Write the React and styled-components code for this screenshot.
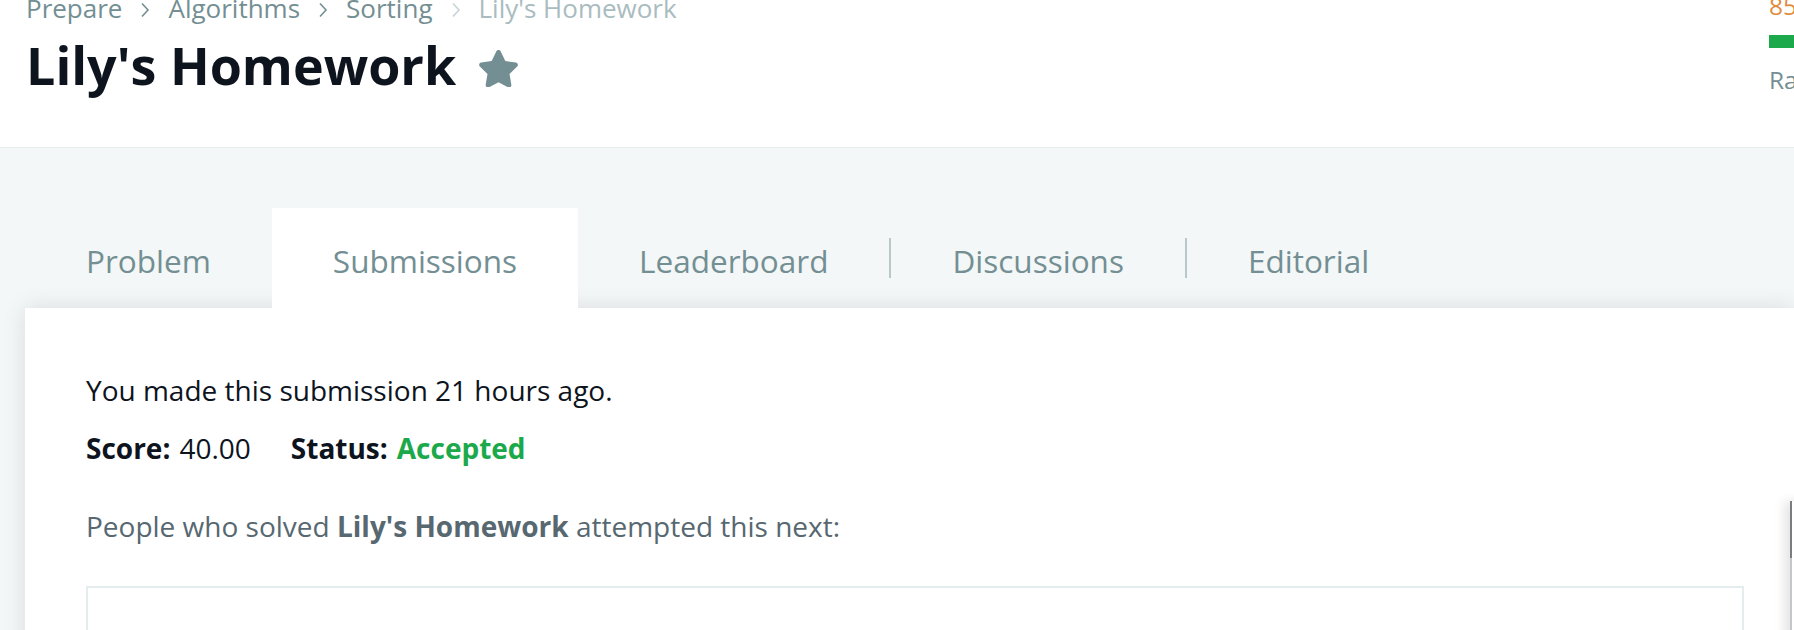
import React from "react";
import styled, { createGlobalStyle } from "styled-components";

const Global = createGlobalStyle`
  html, body { margin: 0; padding: 0; background: #f3f7f7; overflow: hidden; }
  body { font-family: "Open Sans", "Liberation Sans", sans-serif; }
  * { box-sizing: border-box; }
`;

const Page = styled.div`
  position: relative;
  width: 100%;
  height: 630px;
  overflow: hidden;
  background: #f3f7f7;
`;

const Header = styled.header`
  display: flex;
  justify-content: space-between;
  align-items: flex-start;
  height: 148px;
  padding: 0 0 0 26px;
  background: #fff;
  border-bottom: 1px solid #e8eef0;
`;

const TitleBlock = styled.div`
  display: flex;
  flex-direction: column;
`;

const Crumbs = styled.nav`
  display: flex;
  align-items: center;
  gap: 18px;
  margin-top: -9px;
  font-size: 26px;
  line-height: 35px;
  white-space: nowrap;
`;

const Crumb = styled.span`
  color: ${(p) => (p.$current ? "#a9bcbf" : "#738f93")};
`;

const Chevron = ({ light }) => (
  <svg width="10" height="16" viewBox="0 0 10 16" style={{ marginTop: 2 }}>
    <polyline
      points="2,1.5 8,8 2,14.5"
      fill="none"
      stroke={light ? "#c6d3d5" : "#738f93"}
      strokeWidth="1.6"
    />
  </svg>
);

const TitleRow = styled.div`
  display: flex;
  align-items: flex-start;
  margin-top: 7px;
`;

const Title = styled.h1`
  margin: 0;
  font-size: 52px;
  line-height: 63px;
  font-weight: 700;
  color: #0e141e;
  white-space: nowrap;
`;

const StarIcon = styled.svg`
  margin-left: 23px;
  margin-top: 17px;
  flex-shrink: 0;
`;

const Progress = styled.div`
  width: 25px;
  display: flex;
  flex-direction: column;
  white-space: nowrap;
  font-size: 24.5px;
  line-height: 34px;
`;

const ProgressNote = styled.div`
  margin-top: -11.5px;
  color: #df8c3e;
`;

const ProgressBar = styled.div`
  margin-top: 12.5px;
  width: 320px;
  height: 13px;
  background: #1ba94c;
`;

const ProgressMeta = styled.div`
  margin-top: 14.5px;
  color: #738f93;
`;

const Main = styled.main`
  padding: 60px 0 0 25px;
`;

const TabList = styled.div`
  position: relative;
  z-index: 1;
  display: flex;
  align-items: stretch;
`;

const Tab = styled.div`
  height: 100px;
  display: flex;
  align-items: center;
  padding: 4px 61px 0;
  font-size: 31.5px;
  color: #738f93;
  background: ${(p) => (p.$active ? "#fff" : "transparent")};
  white-space: nowrap;
`;

const Divider = styled.span`
  align-self: center;
  width: 2px;
  height: 40px;
  background: #b9c8cb;
`;

const Panel = styled.section`
  background: #fff;
  padding: 61px 50px 0 61px;
  min-height: 420px;
  box-shadow: 0 0 22px rgba(14, 20, 30, 0.11);
`;

const Line = styled.p`
  margin: ${(p) => p.$mt || 0}px 0 0;
  font-size: 28px;
  line-height: 42px;
  color: ${(p) => p.$color || "#0e141e"};
`;

const StatRow = styled.div`
  display: flex;
  gap: 40px;
  margin-top: 16px;
  font-size: 28px;
  line-height: 42px;
  color: #0e141e;
`;

const Stat = styled.div`
  display: flex;
  gap: 9px;
`;

const StatLabel = styled.span`
  font-weight: 700;
`;

const StatValue = styled.span`
  color: ${(p) => p.$color || "#0e141e"};
  font-weight: ${(p) => (p.$bold ? 700 : 400)};
`;

const Strong = styled.b`
  font-weight: 700;
`;

const NextBox = styled.div`
  margin-top: 39px;
  height: 240px;
  border: 2px solid #e5ecee;
`;

const EdgeWidget = styled.div`
  position: absolute;
  left: 1790px;
  top: 501px;
  width: 40px;
  height: 160px;
  background: #fff;
  border-left: 2px solid #c4c8ca;
  box-shadow: -6px 0 10px rgba(0, 0, 0, 0.1);
  &::before {
    content: "";
    position: absolute;
    left: -2px;
    top: 0;
    width: 2px;
    height: 57px;
    background: #7a7d80;
  }
`;

const tabs = [
  { label: "Problem" },
  { label: "Submissions", active: true },
  { label: "Leaderboard", divider: true },
  { label: "Discussions", divider: true },
  { label: "Editorial" },
];

export default function App() {
  return (
    <Page>
      <Global />
      <Header>
        <TitleBlock>
          <Crumbs>
            <Crumb>Prepare</Crumb>
            <Chevron />
            <Crumb>Algorithms</Crumb>
            <Chevron />
            <Crumb>Sorting</Crumb>
            <Chevron light />
            <Crumb $current>Lily's Homework</Crumb>
          </Crumbs>
          <TitleRow>
            <Title>Lily's Homework</Title>
            <StarIcon width="39" height="37" viewBox="24 0 528 505">
              <path
                fill="#738f93"
                d="M316.9 18C311.6 7 300.4 0 288.1 0s-23.4 7-28.8 18L195 150.3 51.4 171.5c-12 1.8-22 10.2-25.7 21.7s-.7 24.2 7.9 32.7L137.8 329 113.2 474.7c-2 12 3 24.2 12.9 31.3s23 8 33.8 2.3l128.3-68.5 128.3 68.5c10.8 5.7 23.9 4.9 33.8-2.3s14.9-19.3 12.9-31.3L438.5 329 542.7 225.9c8.6-8.5 11.7-21.2 7.9-32.7s-13.7-19.9-25.7-21.7L381.2 150.3 316.9 18z"
              />
            </StarIcon>
          </TitleRow>
        </TitleBlock>
        <Progress>
          <ProgressNote>85 more points to get your next star!</ProgressNote>
          <ProgressBar />
          <ProgressMeta>Rank: 412345 | Points: 1065/1150</ProgressMeta>
        </Progress>
      </Header>
      <Main>
        <TabList>
          {tabs.map((t) => (
            <React.Fragment key={t.label}>
              <Tab $active={t.active}>{t.label}</Tab>
              {t.divider && <Divider />}
            </React.Fragment>
          ))}
        </TabList>
        <Panel>
          <Line>You made this submission 21 hours ago.</Line>
          <StatRow>
            <Stat>
              <StatLabel>Score:</StatLabel>
              <StatValue>40.00</StatValue>
            </Stat>
            <Stat>
              <StatLabel>Status:</StatLabel>
              <StatValue $color="#1ba94c" $bold>
                Accepted
              </StatValue>
            </Stat>
          </StatRow>
          <Line $mt={36} $color="#576871">
            People who solved <Strong>Lily's Homework</Strong> attempted this next:
          </Line>
          <NextBox />
        </Panel>
      </Main>
      <EdgeWidget />
    </Page>
  );
}
